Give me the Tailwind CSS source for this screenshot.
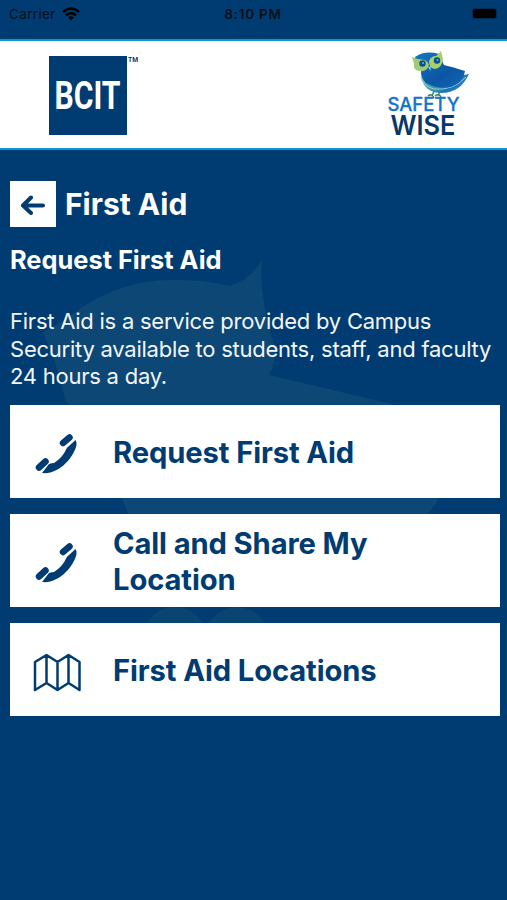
<!DOCTYPE html>
<html lang="en">
<head>
<meta charset="utf-8">
<title>First Aid</title>
<script src="https://cdn.jsdelivr.net/npm/@tailwindcss/browser@4"></script>
</head>
<body class="bg-[#003c71] font-['Inter','Liberation_Sans',sans-serif]">
<div class="relative isolate flex h-[900px] w-[507px] flex-col overflow-hidden bg-[#003c71]">
  <svg class="absolute inset-0 -z-10" width="507" height="900" viewBox="0 0 507 900" fill="#0d4776" aria-hidden="true">
    <path d="M43 332Q60 324 82 307Q125 280 170 280Q205 279 230 286Q252 278 262 260Q258 290 274 345Q277 362 269 375L392 404Q435 420 445 480Q441 500 428 514L420 530H135L122 499Q110 450 65 400Q60 375 53 357Z"/>
    <g fill="#0a4473"><circle cx="175" cy="640" r="33"/><circle cx="237" cy="640" r="33"/></g>
  </svg>
  <div class="flex h-[39px] shrink-0 items-start justify-between pt-[6px] pr-[10px] pl-[9px] text-[#03101c]">
    <div class="flex w-[120px] items-center gap-[6px] text-[13.500px] leading-[17px] tracking-[0.35px]"><span>Carrier</span>
      <svg class="-mt-[2px]" width="18" height="14" viewBox="0 0 18 14" fill="none" stroke="#000" stroke-width="2.6"><path d="M1 5Q9-2 17 5M4 8.3Q9 4 14 8.3"/><path d="M6 10.5Q9 8 12 10.5L9 13.5Z" fill="#000" stroke="none"/></svg>
    </div>
    <div class="text-[13.500px] leading-[17px] font-semibold tracking-[0.8px]">8:10 PM</div>
    <div class="flex w-[120px] justify-end pt-[2px]"><span class="h-[11px] w-[25px] rounded-[3px] border border-[#022c53] bg-black"></span></div>
  </div>
  <header class="flex h-[111px] shrink-0 items-start justify-between border-y-2 border-[#0897d3] bg-white pr-[37px] pl-[48px]">
    <svg class="mt-[14px]" width="92" height="82" viewBox="0 0 92 82"><rect x="1" y="1" width="78" height="79" fill="#003c71"/><text x="6.500" y="53.500" font-family="Roboto" font-weight="700" font-size="38" textLength="66" lengthAdjust="spacingAndGlyphs" fill="#fff">BCIT</text><text x="80" y="7" font-family="Roboto" font-weight="700" font-size="8" textLength="10" lengthAdjust="spacingAndGlyphs" fill="#003c71">TM</text></svg>
    <svg class="mt-[4px]" width="90" height="100" viewBox="380 45 90 100">
      <defs><linearGradient id="wing" x1="0" y1="0" x2="1" y2="1"><stop offset="0" stop-color="#1676c4"/><stop offset=".6" stop-color="#0b56a3"/><stop offset="1" stop-color="#1268b4"/></linearGradient>
      <linearGradient id="belly"><stop offset="0" stop-color="#61b9a4"/><stop offset=".5" stop-color="#1974b4"/><stop offset="1" stop-color="#247fc2"/></linearGradient></defs>
      <path d="M421 70Q420 91 439 93Q460 94 469 74L464 75Z" fill="url(#belly)"/>
      <path d="M421 76Q422 86 434 89Q453 91 466 77" fill="none" stroke="#96cddd" stroke-width="1"/>
      <path d="M415 57Q425 50 439 54L444 65Q453 67 465 71Q464 82 451 87Q437 89 426 83Q421 78 421 71Q416 67 415 57Z" fill="url(#wing)"/>
      <path d="M412 57L418 59Q428 59 429 65Q427 72 420 71Q413 71 414 64Z" fill="#9dcb78"/>
      <path d="M441 51L443 59Q442 68 435 69Q429 68 429 61Q431 56 436 56Z" fill="#a9cf68"/>
      <circle cx="422.500" cy="63.500" r="3.200" fill="#07518d"/><circle cx="437" cy="60.500" r="3.200" fill="#07518d"/><circle cx="423" cy="63" r="1" fill="#69b7d8"/><circle cx="437.500" cy="60" r="1" fill="#69b7d8"/>
      <path d="M428 67L431 66L430.500 71Z" fill="#7fc8e5"/>
      <path d="M434 91L432 96M428 96Q432 93 434 98M439 92V96M435 96Q439 93 441 97" fill="none" stroke="#39856a" stroke-width="1.500"/>
      <text x="387.500" y="111" font-family="Inter" font-size="19" font-weight="500" textLength="72" lengthAdjust="spacingAndGlyphs" fill="#1673c5" stroke="#1673c5" stroke-width=".3">SAFETY</text>
      <text x="390.500" y="134.500" font-family="Inter" font-weight="600" font-size="26.500" textLength="65" lengthAdjust="spacingAndGlyphs" fill="#07386b">WISE</text>
    </svg>
  </header>
  <main class="flex flex-col pt-[31px] pr-[7px] pl-[10px]">
    <div class="flex items-center gap-[9px]">
      <button class="flex size-[46px] items-center justify-center bg-white" aria-label="Back"><svg width="26" height="22" viewBox="0 0 26 22" fill="none" stroke="#003c71" stroke-width="4" stroke-linecap="round" stroke-linejoin="round"><path d="M23 12.500H3M11 4.500L3 12.500L11 20"/></svg></button>
      <h1 class="text-[30px] leading-[46px] font-bold text-white">First Aid</h1>
    </div>
    <h2 class="mt-[17px] text-[25.400px] leading-[32px] font-bold text-white">Request First Aid</h2>
    <p class="mt-[32px] text-[22px] leading-[27.500px] tracking-[-0.240px] whitespace-nowrap text-[#f2f6fa]">First Aid is a service provided by Campus<br>Security available to students, staff, and faculty<br>24 hours a day.</p>
    <div class="mt-[14.500px] flex flex-col gap-4 text-[29.200px] leading-[36px] font-bold tracking-[-0.120px] text-[#003c71]">
      <a class="flex h-[93px] items-center bg-white"><span class="flex w-[103px] shrink-0 pl-[25px]"><svg class="mt-1" width="43" height="43" viewBox="0 0 43 43" fill="#003c71"><path d="M40.500 8Q42 10 41.500 13C39 25 24 43 7 41L14 32Q17 31 19 31Q28 25 31 17.500Q32 15 34 14Z"/><path d="M28 11L34.500 5.500M4 35.500L10.500 29.500" stroke="#003c71" stroke-width="6.500" stroke-linecap="round"/></svg></span><span class="pt-[2px]">Request First Aid</span></a>
      <a class="flex h-[93px] items-center bg-white"><span class="flex w-[103px] shrink-0 pl-[25px]"><svg class="mt-1" width="43" height="43" viewBox="0 0 43 43" fill="#003c71"><path d="M40.500 8Q42 10 41.500 13C39 25 24 43 7 41L14 32Q17 31 19 31Q28 25 31 17.500Q32 15 34 14Z"/><path d="M28 11L34.500 5.500M4 35.500L10.500 29.500" stroke="#003c71" stroke-width="6.500" stroke-linecap="round"/></svg></span><span class="pt-[2px]">Call and Share My<br>Location</span></a>
      <a class="flex h-[93px] items-center bg-white"><span class="flex w-[103px] shrink-0 pt-[7px] pl-[23px]"><svg width="48" height="40" viewBox="0 0 48 40" fill="none" stroke="#003c71" stroke-width="2.500" stroke-linejoin="round"><path d="M2 9L13.500 2L24.500 9L35.500 2L46.500 9V37L35.500 30L24.500 37L13.500 30L2 37ZM13.500 2V30M24.500 9V37M35.500 2V30"/></svg></span><span class="pt-[2px]">First Aid Locations</span></a>
    </div>
  </main>
</div>
</body>
</html>
